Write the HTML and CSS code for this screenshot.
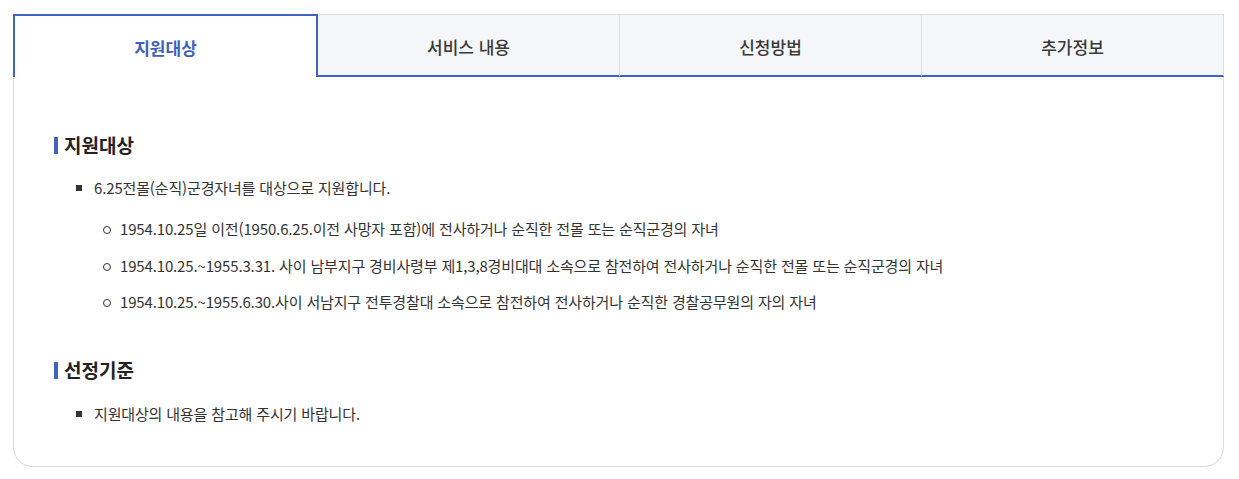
FILE: index.html
```html
<!DOCTYPE html>
<html lang="ko">
<head>
<meta charset="utf-8">
<title>지원대상</title>
<link rel="stylesheet" href="styles.css">
</head>
<body>
<div class="tab-box">
  <ul class="tabs">
    <li class="tab active">지원대상</li>
    <li class="tab">서비스 내용</li>
    <li class="tab">신청방법</li>
    <li class="tab">추가정보</li>
  </ul>
  <div class="panel">
    <h3 class="title">지원대상</h3>
    <ul class="list">
      <li>6.25전몰(순직)군경자녀를 대상으로 지원합니다.
        <ul class="sub">
          <li>1954.10.25일 이전(1950.6.25.이전 사망자 포함)에 전사하거나 순직한 전몰 또는 순직군경의 자녀</li>
          <li>1954.10.25.~1955.3.31. 사이 남부지구 경비사령부 제1,3,8경비대대 소속으로 참전하여 전사하거나 순직한 전몰 또는 순직군경의 자녀</li>
          <li>1954.10.25.~1955.6.30.사이 서남지구 전투경찰대 소속으로 참전하여 전사하거나 순직한 경찰공무원의 자의 자녀</li>
        </ul>
      </li>
    </ul>
    <h3 class="title second">선정기준</h3>
    <ul class="list">
      <li>지원대상의 내용을 참고해 주시기 바랍니다.</li>
    </ul>
  </div>
</div>
</body>
</html>
```

FILE: styles.css
```css
* { box-sizing: border-box; }
body {
  margin: 0;
  background: #fff;
  font-family: "Noto Sans CJK KR", "Noto Sans", sans-serif;
  color: #333;
}
.tab-box {
  margin: 14px 15px 0 13px;
}
.tabs {
  display: flex;
  list-style: none;
  margin: 0;
  padding: 0;
}
.tab {
  flex: 1;
  height: 63px;
  display: flex;
  align-items: center;
  justify-content: center;
  font-size: 17px;
  font-weight: 500;
  color: #3a3a3a;
  background: #f5f6fa;
  border-top: 1px solid #dcdcdc;
  border-left: 1px solid #dcdcdc;
  border-bottom: 2px solid #4163c2;
  padding-top: 2px;
}
.tab:last-child { border-right: 1px solid #dcdcdc; }
.tab.active {
  background: #fff;
  color: #3f5fc0;
  font-weight: 700;
  border: 2px solid #4163c2;
  border-bottom: 0;
}
.tab.active + .tab { border-left: 0; }
.panel {
  border: 1px solid #dcdcdc;
  border-top: 0;
  border-radius: 0 0 20px 20px;
  padding: 54px 40px 40px 40px;
}
.title {
  margin: 0 0 17px;
  font-size: 19px;
  font-weight: 700;
  line-height: 28px;
  color: #222;
  display: flex;
  align-items: center;
}
.title::before {
  content: "";
  width: 4px;
  height: 17px;
  background: #4163c2;
  margin-right: 6px;
}
.title.second { margin-top: 42px; margin-bottom: 18px; }
.list {
  list-style: none;
  margin: 0;
  padding: 0 0 0 39px;
  font-size: 15px;
  line-height: 24px;
  color: #333;
  letter-spacing: -0.15px;
}
.list > li { position: relative; padding-left: 1px; }
.list > li::before {
  content: "";
  position: absolute;
  left: -17px;
  top: 9px;
  width: 6px;
  height: 6px;
  background: #333;
}
.sub {
  list-style: none;
  margin: 17px 0 0;
  padding: 0 0 0 26px;
}
.sub > li { position: relative; margin-top: 12.5px; }
.sub > li:first-child { margin-top: 0; }
.sub > li::before {
  content: "";
  position: absolute;
  left: -17px;
  top: 9px;
  width: 6px;
  height: 6px;
  border: 1px solid #333;
  border-radius: 50%;
}
```
